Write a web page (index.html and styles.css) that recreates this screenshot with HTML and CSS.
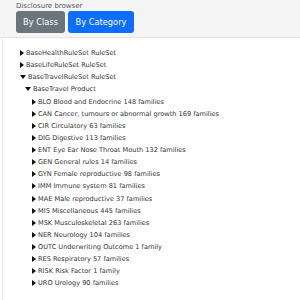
FILE: index.html
```html
<!DOCTYPE html>
<html lang="en">

<head>
    <meta charset="UTF-8">
    <title>Disclosure browser</title>
    <link rel="stylesheet" href="styles.css">
</head>

<body>
    <div class="toolbar">
        <div class="toolbar-title">Disclosure browser</div>
        <div class="toolbar-buttons">
            <button class="btn btn-class">By Class</button>
            <button class="btn btn-category">By Category</button>
        </div>
    </div>

    <div class="panel">
        <ul class="tree">
            <li><span class="node closed">BaseHealthRuleSet RuleSet</span></li>
            <li><span class="node closed">BaseLifeRuleSet RuleSet</span></li>
            <li>
                <span class="node open">BaseTravelRuleSet RuleSet</span>
                <ul>
                    <li>
                        <span class="node open">BaseTravel Product</span>
                        <ul>
                            <li><span class="node closed">BLO Blood and Endocrine 148 families</span></li>
                            <li><span class="node closed">CAN Cancer, tumours or abnormal growth 169 families</span></li>
                            <li><span class="node closed">CIR Circulatory 63 families</span></li>
                            <li><span class="node closed">DIG Digestive 113 families</span></li>
                            <li><span class="node closed">ENT Eye Ear Nose Throat Mouth 132 families</span></li>
                            <li><span class="node closed">GEN General rules 14 families</span></li>
                            <li><span class="node closed">GYN Female reproductive 98 families</span></li>
                            <li><span class="node closed">IMM Immune system 81 families</span></li>
                            <li><span class="node closed">MAE Male reproductive 37 families</span></li>
                            <li><span class="node closed">MIS Miscellaneous 445 families</span></li>
                            <li><span class="node closed">MSK Musculoskeletal 263 families</span></li>
                            <li><span class="node closed">NER Neurology 104 families</span></li>
                            <li><span class="node closed">OUTC Underwriting Outcome 1 family</span></li>
                            <li><span class="node closed">RES Respiratory 57 families</span></li>
                            <li><span class="node closed">RISK Risk Factor 1 family</span></li>
                            <li><span class="node closed">URO Urology 90 families</span></li>
                        </ul>
                    </li>
                </ul>
            </li>
        </ul>
    </div>
</body>

</html>
```

FILE: styles.css
```css
body {
    margin: 0;
    font-family: 'DejaVu Sans', sans-serif;
    background: #ffffff;
    color: #212529;
}

.toolbar {
    background: #f5f5f5;
    height: 38px;
    padding: 0 16px;
    border-bottom: 1px solid #e2e2e2;
    box-sizing: border-box;
}

.toolbar-title {
    font-size: 7px;
    color: #555;
    line-height: 10px;
    padding-top: 1px;
}

.toolbar-buttons {
    display: flex;
    gap: 3px;
}

.btn {
    font-family: 'DejaVu Sans', sans-serif;
    font-size: 8.25px;
    color: #ffffff;
    border: none;
    border-radius: 3px;
    height: 22px;
    padding: 0;
    white-space: nowrap;
    text-align: center;
    cursor: pointer;
}

.btn-class {
    background-color: #6c757d;
    width: 49px;
}

.btn-category {
    background-color: #0d6efd;
    width: 66px;
}

.panel {
    margin-left: 2px;
    border-left: 1px solid #ececec;
    min-height: 261px;
    padding-top: 9px;
}

.tree,
.tree ul {
    list-style: none;
    margin: 0;
    padding: 0;
}

.tree {
    padding-left: 17px;
}

.tree ul {
    padding-left: 5px;
}

.tree ul ul {
    padding-left: 7px;
}

.node {
    display: flex;
    align-items: center;
    height: 12.13px;
    font-size: 6.6px;
    line-height: 12.13px;
    color: #333;
    white-space: nowrap;
}

.node::before {
    content: "";
    display: inline-block;
    margin-right: 2px;
}

.node.closed::before {
    border-left: 4px solid #111;
    border-top: 3px solid transparent;
    border-bottom: 3px solid transparent;
}

.node.open::before {
    border-top: 4px solid #111;
    border-left: 3px solid transparent;
    border-right: 3px solid transparent;
}
```
